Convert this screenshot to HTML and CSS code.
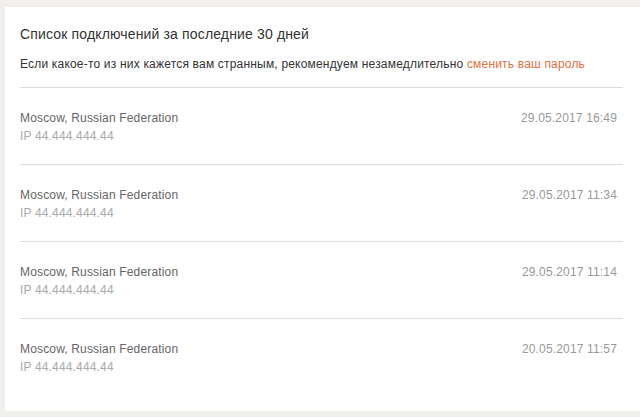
FILE: index.html
```html
<!DOCTYPE html>
<html lang="ru">
<head>
<meta charset="utf-8">
<title>Список подключений</title>
<link rel="stylesheet" href="styles.css">
</head>
<body>
<div class="card">
  <div class="head">
    <h1 class="title">Список подключений за последние 30 дней</h1>
    <p class="note">Если какое-то из них кажется вам странным, рекомендуем незамедлительно <a class="link" href="#">сменить ваш пароль</a></p>
  </div>
  <ul class="list">
    <li class="row">
      <div class="info"><div class="loc">Moscow, Russian Federation</div><div class="ip">IP 44.444.444.44</div></div>
      <div class="date">29.05.2017 16:49</div>
    </li>
    <li class="row">
      <div class="info"><div class="loc">Moscow, Russian Federation</div><div class="ip">IP 44.444.444.44</div></div>
      <div class="date">29.05.2017 11:34</div>
    </li>
    <li class="row">
      <div class="info"><div class="loc">Moscow, Russian Federation</div><div class="ip">IP 44.444.444.44</div></div>
      <div class="date">29.05.2017 11:14</div>
    </li>
    <li class="row">
      <div class="info"><div class="loc">Moscow, Russian Federation</div><div class="ip">IP 44.444.444.44</div></div>
      <div class="date">20.05.2017 11:57</div>
    </li>
  </ul>
</div>
</body>
</html>
```
FILE: styles.css
```css
html, body {
  margin: 0;
  padding: 0;
  background: #f0efeb;
  font-family: "Liberation Sans", Arial, sans-serif;
  overflow: hidden;
}
.card {
  margin: 7px 0 0 5px;
  width: 653px;
  background: #fff;
  padding: 17px 35px 16px 15px;
  box-sizing: border-box;
}
.head {
  padding-bottom: 14px;
  border-bottom: 1px solid #dcdcdc;
}
.title {
  margin: 0;
  font-size: 14px;
  font-weight: normal;
  line-height: 20px;
  letter-spacing: 0.15px;
  color: #333;
}
.note {
  margin: 11px 0 0;
  font-size: 12px;
  line-height: 18px;
  letter-spacing: 0.19px;
  color: #333;
}
.link {
  color: #e2703f;
  text-decoration: none;
}
.list {
  list-style: none;
  margin: 0;
  padding: 0;
}
.row {
  display: flex;
  justify-content: space-between;
  align-items: flex-start;
  padding: 21px 0 19px;
  border-bottom: 1px solid #dcdcdc;
  font-size: 12px;
  line-height: 18px;
  letter-spacing: 0.16px;
}
.row:last-child {
  border-bottom: none;
}
.loc {
  color: #666;
}
.ip {
  color: #aaa;
}
.date {
  color: #999;
  padding-right: 6px;
}
```
